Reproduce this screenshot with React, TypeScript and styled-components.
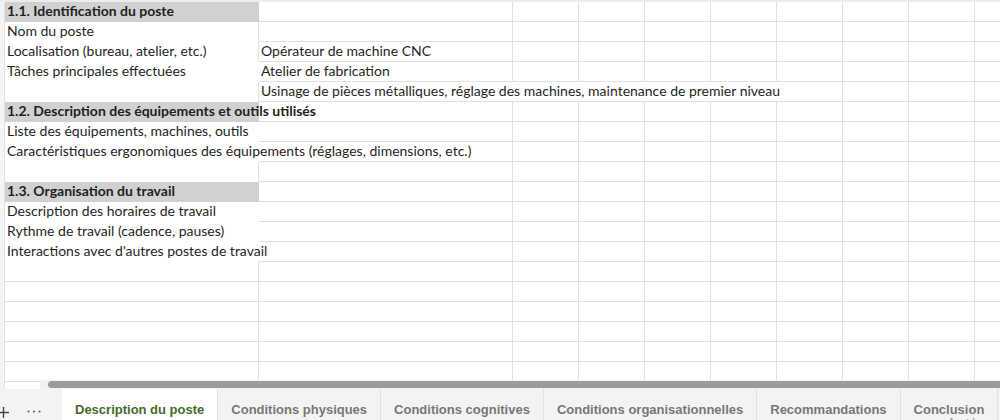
import styled, { createGlobalStyle } from 'styled-components';

const GlobalStyle = createGlobalStyle`
  html, body {
    margin: 0;
    padding: 0;
    background: #ffffff;
  }
`;

const Page = styled.div`
  position: relative;
  width: 1000px;
  height: 420px;
  overflow: hidden;
  display: flex;
  flex-direction: column;
  background: #ffffff;
`;

const GridArea = styled.div`
  position: relative;
  height: 389px;
  flex-shrink: 0;
  overflow: hidden;
`;

const TopStrip = styled.div`
  height: 2px;
  background: #ececec;
`;

const Row = styled.div`
  display: grid;
  grid-template-columns: 5px 254px 254px repeat(8, 66px);
  height: 20px;
`;

const Gutter = styled.div`
  background: #f4f4f4;
  border-right: 1px solid #e1e1e1;
`;

interface CellProps {
  $filled?: boolean;
  $edge?: boolean;
  $header?: boolean;
  $span?: number;
}

const Cell = styled.div<CellProps>`
  box-sizing: border-box;
  height: 20px;
  padding: 0 2px;
  border-right: 1px solid ${({ $filled, $edge }) => ($filled && !$edge ? 'transparent' : '#e1e1e1')};
  border-bottom: 1px solid ${({ $filled }) => ($filled ? 'transparent' : '#e1e1e1')};
  background: ${({ $header }) => ($header ? '#d1d1d1' : 'transparent')};
  grid-column: ${({ $span }) => ($span ? `span ${$span}` : 'auto')};
  font-family: Lato, 'Liberation Sans', sans-serif;
  font-size: 14px;
  font-weight: ${({ $header }) => ($header ? 700 : 400)};
  line-height: 18px;
  color: #1f1f1f;
  white-space: nowrap;
  overflow: visible;
`;

const ScrollTrack = styled.div`
  position: absolute;
  left: 40px;
  right: 0;
  top: 380px;
  height: 9px;
  background: #f1f1f1;
  display: flex;
  align-items: center;
  padding-left: 8px;
`;

const ScrollThumb = styled.div`
  flex: 1;
  height: 7px;
  border-radius: 4px 0 0 4px;
  background: #9b9b9b;
`;

const TabBar = styled.div`
  display: flex;
  align-items: stretch;
  height: 36px;
  flex-shrink: 0;
  background: #f3f3f3;
`;

const TabTools = styled.div`
  display: flex;
  align-items: flex-start;
  width: 62px;
  flex-shrink: 0;
  padding-top: 16px;
  box-sizing: border-box;
`;

const PlusButton = styled.svg`
  margin-left: -2px;
  margin-top: 2px;
`;

const MoreButton = styled.svg`
  margin-left: 18px;
  margin-top: 5px;
`;

const Tab = styled.div<{ $active?: boolean }>`
  box-sizing: border-box;
  padding: 13px 13px 8px;
  border-right: 1px solid #e0e0e0;
  background: ${({ $active }) => ($active ? '#ffffff' : 'transparent')};
  font-family: 'Liberation Sans', Arial, sans-serif;
  font-size: 13px;
  font-weight: 700;
  line-height: 15px;
  color: ${({ $active }) => ($active ? '#456a2c' : '#777777')};
  white-space: nowrap;
`;

const Watermark = styled.span`
  position: absolute;
  left: 946px;
  top: 422px;
  height: 4px;
  font-family: 'Noto Sans', sans-serif;
  font-size: 17px;
  line-height: 4px;
  color: #a3a3a3;
  white-space: nowrap;
`;

interface SheetRow {
  a?: string;
  b?: string;
  header?: boolean;
  filled?: boolean;
  edge?: boolean;
  bSpan?: number;
}

const rows: SheetRow[] = [
  { a: '1.1. Identification du poste', header: true, filled: true },
  { a: 'Nom du poste', filled: true, edge: true },
  { a: 'Localisation (bureau, atelier, etc.)', b: 'Opérateur de machine CNC', filled: true, edge: true },
  { a: 'Tâches principales effectuées', b: 'Atelier de fabrication', filled: true },
  {
    b: 'Usinage de pièces métalliques, réglage des machines, maintenance de premier niveau',
    filled: true,
    edge: true,
    bSpan: 6,
  },
  { a: '1.2. Description des équipements et outils utilisés', header: true, filled: true },
  { a: 'Liste des équipements, machines, outils', filled: true },
  { a: 'Caractéristiques ergonomiques des équipements (réglages, dimensions, etc.)', filled: true },
  { filled: true, edge: true },
  { a: '1.3. Organisation du travail', header: true, filled: true },
  { a: 'Description des horaires de travail', filled: true },
  { a: 'Rythme de travail (cadence, pauses)', filled: true },
  { a: "Interactions avec d'autres postes de travail", filled: true },
  {},
  {},
  {},
  {},
  {},
  {},
  {},
];

const tabs = [
  'Description du poste',
  'Conditions physiques',
  'Conditions cognitives',
  'Conditions organisationnelles',
  'Recommandations',
  'Conclusion',
];

function SheetLine({ row }: { row: SheetRow }) {
  const span = row.bSpan ?? 1;
  const rest = 9 - span;

  return (
    <Row>
      <Gutter />
      <Cell $filled={row.filled} $edge={row.edge} $header={row.header}>
        {row.a}
      </Cell>
      <Cell $span={row.bSpan}>{row.b}</Cell>
      {Array.from({ length: rest }).map((_, i) => (
        <Cell key={i} />
      ))}
    </Row>
  );
}

export default function App() {
  return (
    <Page>
      <GlobalStyle />
      <GridArea>
        <TopStrip />
        {rows.map((row, i) => (
          <SheetLine key={i} row={row} />
        ))}
        <ScrollTrack>
          <ScrollThumb />
        </ScrollTrack>
      </GridArea>

      <TabBar>
        <TabTools>
          <PlusButton width="11" height="11" viewBox="0 0 11 11">
            <path d="M5.5 0v11M0 5.5h11" stroke="#444" strokeWidth="1.4" />
          </PlusButton>
          <MoreButton width="14" height="3" viewBox="0 0 14 3">
            <circle cx="1.5" cy="1.5" r="1.1" fill="#666" />
            <circle cx="7" cy="1.5" r="1.1" fill="#666" />
            <circle cx="12.5" cy="1.5" r="1.1" fill="#666" />
          </MoreButton>
        </TabTools>
        {tabs.map((name, i) => (
          <Tab key={name} $active={i === 0}>
            {name}
          </Tab>
        ))}
      </TabBar>

      <Watermark>Activer Windows</Watermark>
    </Page>
  );
}
